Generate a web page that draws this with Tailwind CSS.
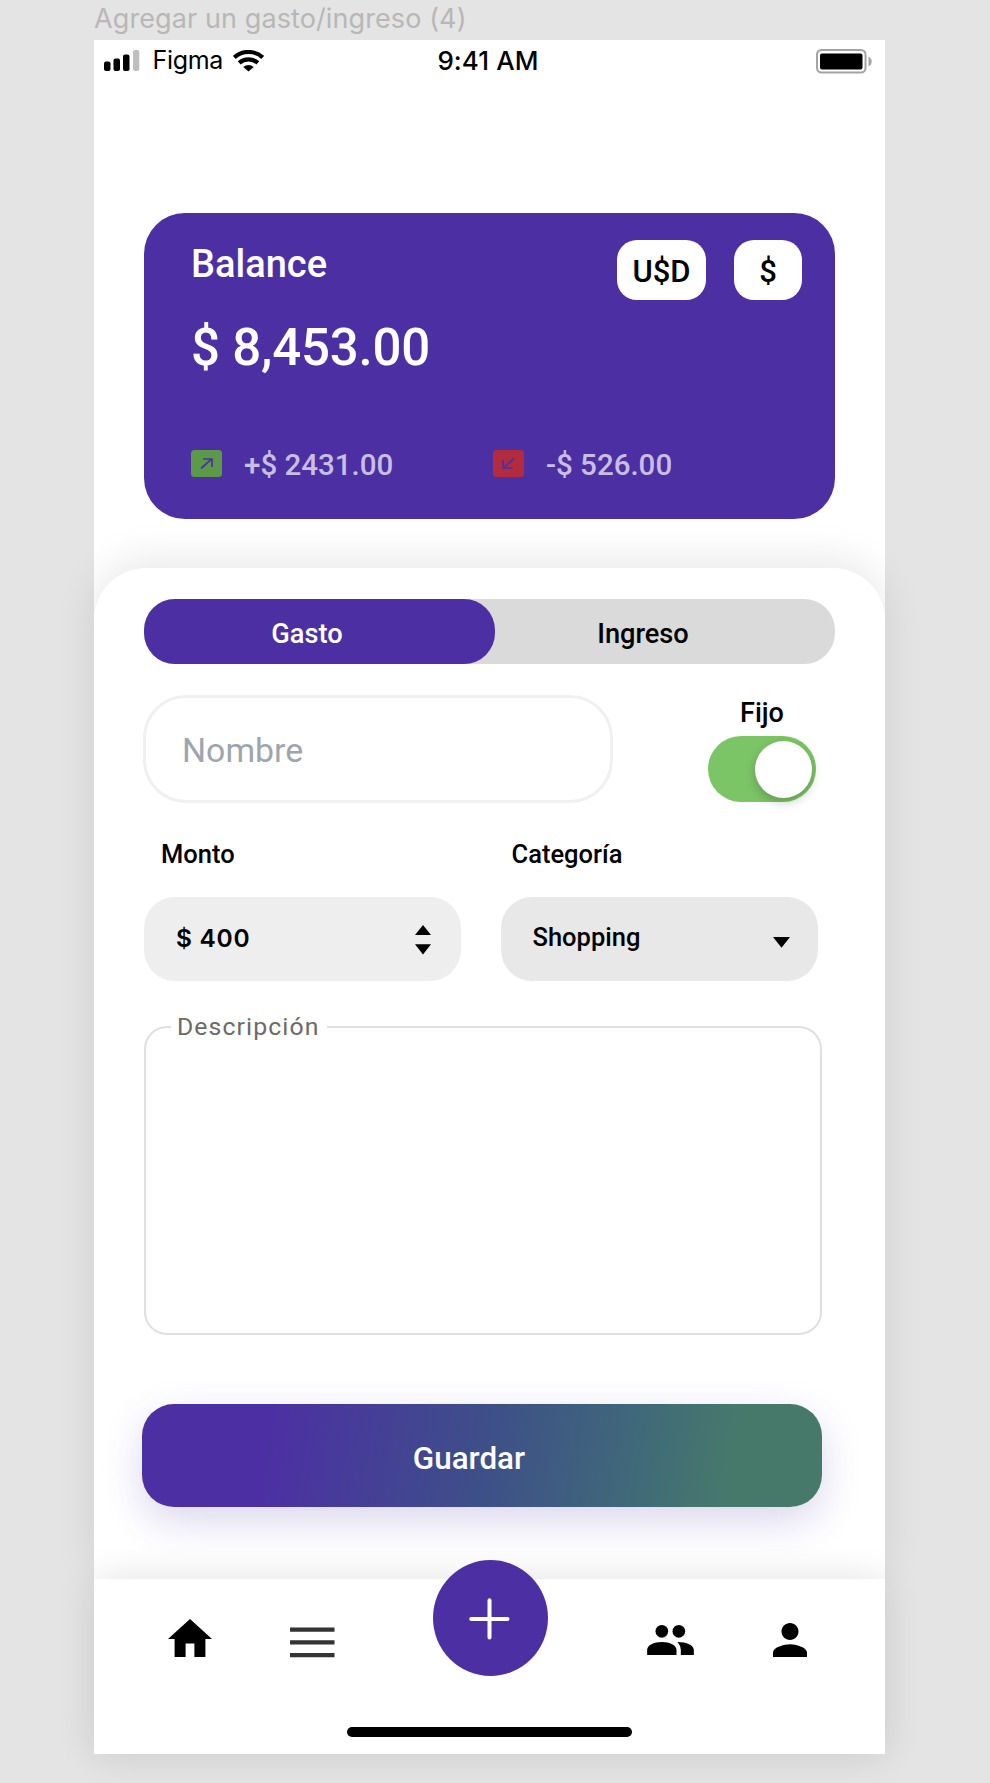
<!DOCTYPE html>
<html lang="es">
<head>
<meta charset="utf-8">
<title>Agregar un gasto/ingreso</title>
<script src="https://cdn.jsdelivr.net/npm/@tailwindcss/browser@4"></script>
</head>
<body class="h-[1783px] w-[990px] overflow-hidden bg-[#e4e4e4] font-['Roboto',sans-serif] text-black">
<div class="h-10 pl-[94px] font-['Inter',sans-serif] text-[27px] leading-[38px] tracking-[0.1px] text-[#b7b7b7]">Agregar un gasto/ingreso (4)</div>
<main class="ml-[94px] flex h-[1714px] w-[791px] flex-col bg-white">
  <!-- Status bar -->
  <div class="grid h-[42px] grid-cols-3 font-['Inter',sans-serif] text-[25px] leading-[41px]">
    <div class="flex pl-[10px]">
      <svg class="mt-[10px] h-[21px] w-[36px]" viewBox="0 0 36 21"><rect x="0" y="11.5" width="6.5" height="9.5" rx="2"/><rect x="9.5" y="8.5" width="6.5" height="12.5" rx="2"/><rect x="19" y="4.5" width="6.5" height="16.5" rx="2"/><rect x="29" y="0" width="6.3" height="21" rx="2" fill="#bfbfbf"/></svg>
      <span class="ml-[12.5px] tracking-[-0.3px]">Figma</span>
      <svg class="mt-[10px] ml-[9.5px] h-[22px] w-[31px]" viewBox="0 0 31 22" fill="none" stroke="#000" stroke-width="4.2"><path d="M1.300 7.400C9.300 .2 21.700 .2 29.700 7.400"/><path d="M6.200 12.900c5.300-4.800 13.300-4.800 18.600 0"/><path d="M10.300 17c3-2.700 7.400-2.700 10.400 0L15.500 21.600Z" fill="#000" stroke="none"/></svg>
    </div>
    <div class="pr-[3px] text-center text-[26px] font-medium tracking-[0.1px] whitespace-nowrap">9:41 AM</div>
    <div class="flex justify-end pr-[12px]">
      <svg class="mt-[9px] h-[25px] w-[57px]" viewBox="0 0 57 25"><rect x="1" y="1" width="48.5" height="22.5" rx="4.5" fill="none" stroke="#a3a3a3" stroke-width="2"/><rect x="4" y="4.5" width="42.5" height="16" rx="2"/><path d="M52.5 7.500C56.800 9.500 56.800 15.500 52.500 17.500Z" fill="#a3a3a3"/></svg>
    </div>
  </div>

  <!-- Balance card -->
  <section class="mt-[131px] ml-[50px] h-[306px] w-[691px] rounded-[41px] bg-[#4c30a3] pt-[27px] pr-[33px] pl-[47px] font-medium text-white">
    <div class="flex h-[60px]">
      <h1 class="flex-1 text-[38px] leading-[48px]">Balance</h1>
      <button class="h-[60px] w-[89px] rounded-[20px] bg-white text-[31px] leading-[64px] text-black">U$D</button>
      <button class="ml-[28px] h-[60px] w-[68px] rounded-[20px] bg-white text-[31px] leading-[64px] text-black">$</button>
    </div>
    <p class="mt-[18px] text-[51px] leading-[60px] tracking-[-0.2px]">$ 8,453.00</p>
    <div class="mt-[72px] flex h-[27px] text-[29.500px] leading-[30px] text-white/70">
      <svg class="h-[27px] w-[31px]" viewBox="0 0 31 27"><rect width="31" height="27" rx="3.500" fill="#5c9a4a"/><path d="M10 18.500 20.500 9.200M12 9h9v8" fill="none" stroke="#4c30a3" stroke-width="1.700"/></svg>
      <span class="ml-[22px] w-[249px]">+$ 2431.00</span>
      <svg class="h-[27px] w-[31px]" viewBox="0 0 31 27"><rect width="31" height="27" rx="3.500" fill="#b32b3e"/><path d="M21 8.500 10.500 17.800M10 10v8h9.500" fill="none" stroke="#4c30a3" stroke-width="1.700"/></svg>
      <span class="ml-[22px]">-$ 526.00</span>
    </div>
  </section>

  <!-- Form sheet -->
  <section class="mt-[49px] h-[1011px] rounded-t-[52px] bg-white pt-[31px] pl-[50px] font-medium shadow-[0_-9px_41px_rgba(0,0,0,0.09)]">
    <div class="flex h-[65px] w-[691px] rounded-[31px] bg-[#dadada] text-[27.200px] leading-[71px]">
      <div class="h-[65px] w-[351px] rounded-[31px] bg-[#4c30a3] pr-[25px] text-center text-white">Gasto</div>
      <div class="w-[296px] text-center">Ingreso</div>
    </div>
    <div class="mt-[31px] flex">
      <div class="-ml-px h-[108px] w-[470px] rounded-[43px] border-[3px] border-[#f0f0f0] pl-[36px] text-[33.800px] leading-[105px] font-normal text-[#9da6ad]">Nombre</div>
      <div class="ml-[95px] w-[108px]">
        <div class="h-[41px] text-center text-[27px] leading-[36px]">Fijo</div>
        <div class="flex h-[66px] w-[108px] items-center justify-end rounded-full bg-[#7cc566] pr-1"><div class="size-[57px] rounded-full bg-white shadow-[0_4px_11px_rgba(0,0,0,0.22)]"></div></div>
      </div>
    </div>
    <div class="mt-[36px] flex pl-[17px] text-[25.500px] leading-[31px]">
      <div class="w-[350.500px]">Monto</div><div>Categoría</div>
    </div>
    <div class="mt-[27px] flex gap-[40px]">
      <div class="flex h-[84px] w-[317px] justify-between rounded-[31px] bg-[#eee] pr-[30px] pl-[32px]">
        <span class="font-['Inter',sans-serif] text-[24.500px] leading-[83px] font-semibold tracking-[0.7px]">$ 400</span>
        <svg class="mt-[28px] h-[30px] w-4" viewBox="0 0 16 30"><path d="M8 0 16 10H0ZM0 19.200H16L8 29.500Z"/></svg>
      </div>
      <div class="flex h-[84px] w-[317px] justify-between rounded-[31px] bg-[#e8e8e8] pr-[28px] pl-[31.500px] text-[25.500px] leading-[80px]">
        <span>Shopping</span>
        <svg class="mt-[40px] h-[11px] w-[17px]" viewBox="0 0 17 11"><path d="M0 0H17L8.500 10.700Z"/></svg>
      </div>
    </div>
    <div class="relative mt-[45px] h-[309px] w-[678px] rounded-[23px] border-2 border-[#e0e0e0]">
      <span class="absolute -top-[16px] left-[25px] w-[156px] bg-white pl-[6px] text-[24.800px] leading-[30px] font-normal tracking-[1.1px] text-[#6a6a6a]">Descripción</span>
    </div>
    <button class="mt-[69px] -ml-[2px] block h-[103px] w-[680px] rounded-[32px] bg-[linear-gradient(99deg,#4c30a3_19%,#3d5088_51%,#406a78_73%,#47796b_86%)] pr-[26px] text-[31.400px] leading-[109px] text-white shadow-[0_14px_40px_rgba(76,48,163,0.2)]">Guardar</button>
  </section>

  <!-- Bottom navigation -->
  <nav class="relative h-[175px] bg-white shadow-[0_0_36px_rgba(0,0,0,0.12)]">
    <div class="flex items-start pl-[74px]">
      <svg class="mt-[40px] h-[38px] w-[44px]" viewBox="2 3 20 17" preserveAspectRatio="none"><path d="M10 20v-6h4v6h5v-8h3L12 3 2 12h3v8z"/></svg>
      <svg class="mt-[48px] ml-[78px] h-[31px] w-[45px]" viewBox="0 0 45 31" fill="#333"><path d="M0 .5H44.500V4.800H0ZM0 13.200H44.500V17.500H0ZM0 26H44.500V30.200H0Z"/></svg>
      <div class="-mt-[19px] ml-[98px] flex h-[116px] w-[115px] rounded-[50%] bg-[#4c30a3]">
        <svg class="mt-[37px] ml-[36px] size-[43px]" viewBox="0 0 43 43" fill="none" stroke="#fff" stroke-width="4" stroke-linecap="round"><path d="M2.200 22H38.500M20.500 3.200V40.500"/></svg>
      </div>
      <svg class="mt-[46px] ml-[99px] h-[30px] w-[47px]" viewBox="0 0 140 90"><circle cx="44" cy="19" r="19"/><circle cx="95" cy="19" r="19"/><path d="M0 90V75C0 60 20 51 44 51S88 60 88 75V90ZM101 90V75Q101 62 91 51C118 51 140 60 140 75V90Z"/></svg>
      <svg class="mt-[44px] ml-[79px] h-[34px] w-[34px]" viewBox="4 4 16 16"><path d="M12 12c2.210 0 4-1.790 4-4s-1.790-4-4-4-4 1.790-4 4 1.790 4 4 4zm0 2c-2.670 0-8 1.340-8 4v2h16v-2c0-2.660-5.330-4-8-4z"/></svg>
    </div>
    <div class="mt-[50.500px] ml-[253px] h-[10.500px] w-[285px] rounded-full bg-black"></div>
  </nav>
</main>
</body>
</html>
